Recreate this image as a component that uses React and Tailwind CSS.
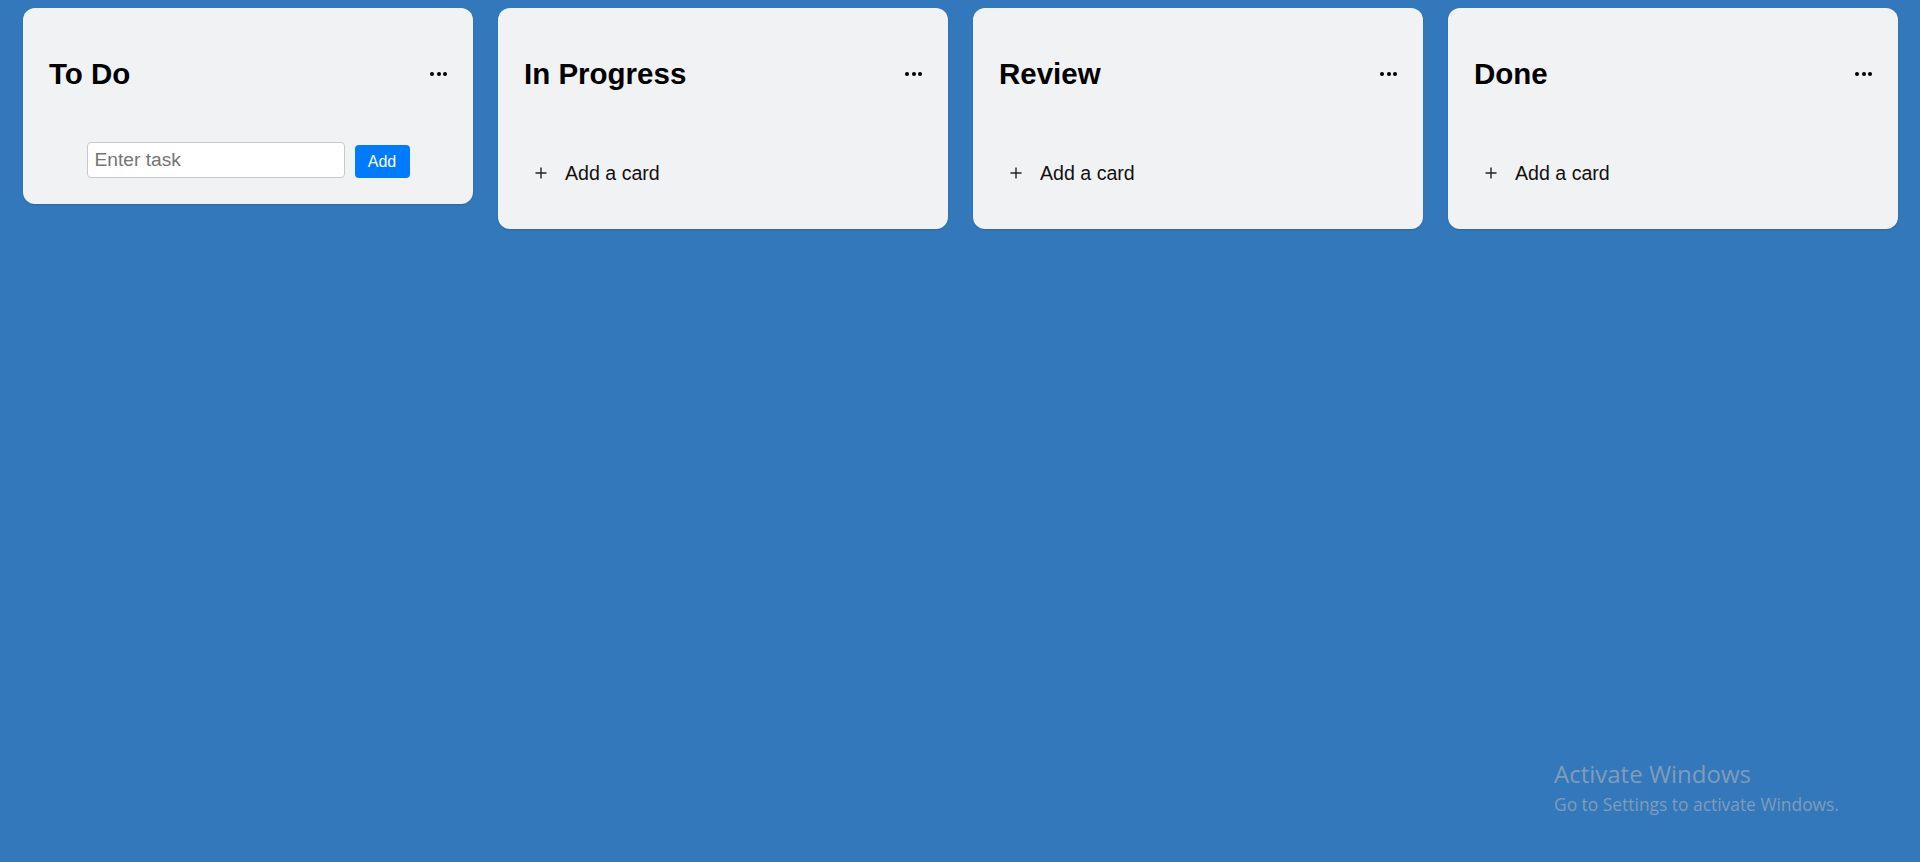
import React from "react";

function Dots() {
  return (
    <div className="flex items-center gap-[2.5px]">
      <span className="block w-[4px] h-[4px] rounded-full bg-black" />
      <span className="block w-[4px] h-[4px] rounded-full bg-black" />
      <span className="block w-[4px] h-[4px] rounded-full bg-black" />
    </div>
  );
}

function Header({ title }) {
  return (
    <div className="flex items-center justify-between h-[80px]">
      <h2 className="text-[29.5px] leading-[32px] font-bold text-black">{title}</h2>
      <Dots />
    </div>
  );
}

function AddCard() {
  return (
    <div className="mt-[28px] h-[61px] flex items-center pl-[11px] gap-[18px] text-[#111]">
      <svg width="12" height="12" viewBox="0 0 12 12" className="shrink-0">
        <path d="M6 0.5V11.5M0.5 6H11.5" stroke="#222" strokeWidth="1.4" />
      </svg>
      <span className="text-[19.6px] leading-[22px]">Add a card</span>
    </div>
  );
}

function Column({ title, children }) {
  return (
    <div className="w-[450px] shrink-0 bg-[#f1f2f4] rounded-[12px] px-[26px] pt-[26px] pb-[26px] shadow-[0_1px_2px_rgba(0,0,0,0.15)]">
      <Header title={title} />
      {children}
    </div>
  );
}

export default function App() {
  return (
    <div
      className="relative min-h-[862px] w-full bg-[#3378bb] pl-[23px] pr-[22px] pt-[8px]"
      style={{ fontFamily: '"Liberation Sans", Arial, sans-serif' }}
    >
      <div className="flex items-start gap-[25px]">
        <Column title="To Do">
          <div className="mt-[28px] flex items-end justify-center gap-[10px]">
            <input
              type="text"
              placeholder="Enter task"
              className="w-[258px] h-[36px] border border-[#c8c8c8] rounded-[4px] bg-white pl-[7px] text-[19.2px] placeholder:text-[#757575] outline-none"
            />
            <button className="h-[33px] w-[55px] rounded-[4px] bg-[#007bff] text-white text-[16px]">
              Add
            </button>
          </div>
        </Column>
        <Column title="In Progress">
          <AddCard />
        </Column>
        <Column title="Review">
          <AddCard />
        </Column>
        <Column title="Done">
          <AddCard />
        </Column>
      </div>

      <div
        className="absolute left-[1554px] top-[760px] text-[#809cba] pointer-events-none"
        style={{ fontFamily: '"Open Sans", "Noto Sans", sans-serif' }}
      >
        <div className="text-[24px] leading-[28px]">Activate Windows</div>
        <div className="text-[17.4px] leading-[24px] mt-[4px]">Go to Settings to activate Windows.</div>
      </div>
    </div>
  );
}
